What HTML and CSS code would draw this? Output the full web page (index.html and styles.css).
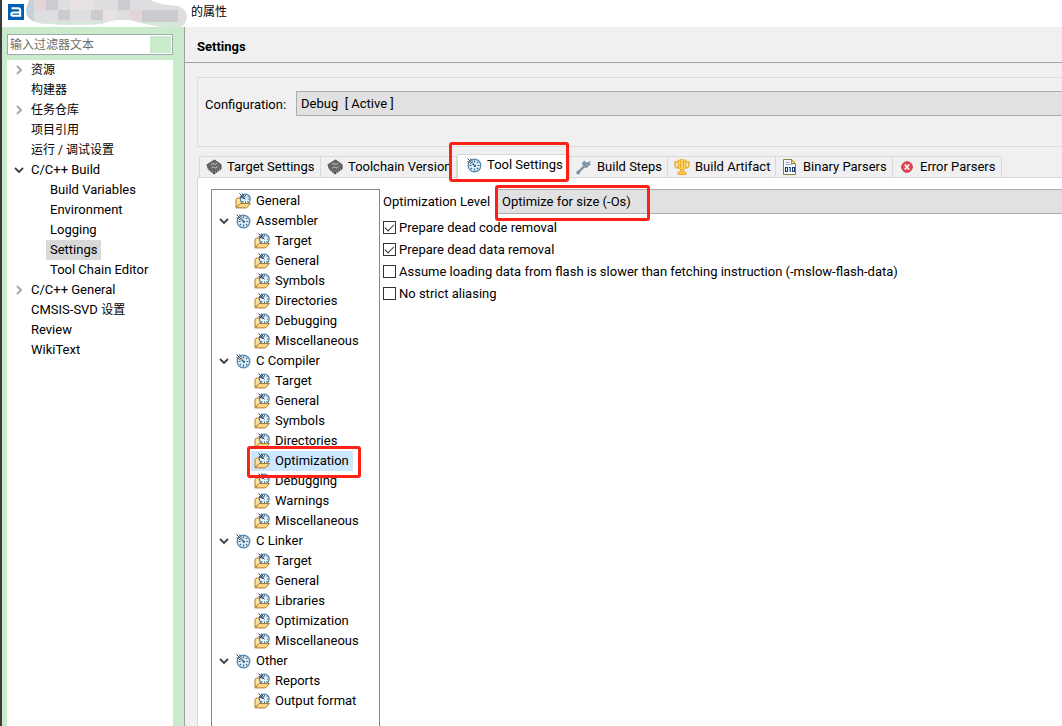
FILE: index.html
```html
<!DOCTYPE html>
<html lang="zh-CN">
<head>
<meta charset="utf-8">
<title>的属性</title>
<link rel="stylesheet" href="styles.css">
</head>
<body>
<svg class="defs" width="0" height="0" aria-hidden="true">
  <symbol id="dial" viewBox="0 0 16 16">
    <circle cx="8.500" cy="8.500" r="6.300" fill="#e3f0f8" stroke="#5d8db4" stroke-width="1.400"/>
    <path d="M8.500 3.500v2M8.500 11.500v2M3.500 8.500h2M11.500 8.500h2M12.200 4.800l-1.200 1.200M4.800 12.200l1.200-1.200M12.200 12.200l-1.200-1.200" stroke="#2f6591" stroke-width="1.200"/>
    <path d="M1.500 1.500l7 7M4.500 1.500l3 5.500M1.500 4.500l5.500 3" stroke="#34495c" stroke-width="1"/>
    <path d="M3 4.500l4 3M4.500 3l3 4" stroke="#fff" stroke-width=".6"/>
    <circle cx="8.800" cy="8.800" r="1.300" fill="#2f6591"/>
  </symbol>
  <symbol id="folder" viewBox="0 0 16 16">
    <path d="M1 14.500V6.500l1.200-1.500h3l1.500 1.500V10z" fill="#fbe3a4" stroke="#b27a2c"/>
    <circle cx="10.300" cy="6" r="4.900" fill="#e9f4fa" stroke="#4a80ab" stroke-width="1.200"/>
    <path d="M10.500 2v1.500M13.300 3.200l-1 1M14.300 6h-1.500M7.300 9l1-1M13.300 9l-1-1M10.500 10V8.500" stroke="#2f6591"/>
    <path d="M4.500.500l6 6M7.300 .500l2.500 4M4.800 3.500l4 2" stroke="#2d4257"/>
    <path d="M1.100 14.900l4-4.400h10.400l-4 4.400z" fill="#f9d68a" stroke="#b27a2c"/>
  </symbol>
  <symbol id="chip" viewBox="0 0 16 16">
    <path d="M.500 5.500L8.500 .500l7 5v4.500L8 15.500l-6-5z" fill="#454545"/>
    <path d="M1 5.500L8.500 1l6.500 4.500-1 4.500-6 4-5-4z" fill="#686868"/>
    <path d="M2.500 9.500v1.500M4.500 11v1.500M6.500 12.500V14M9.500 12.500V14M11.500 11v1.500M13.500 9.500v1.500" stroke="#999"/>
    <path d="M5 5.500q2-2 3-.5t3-1M5.500 9q2-2 3-.5t3-1" fill="none" stroke="#c4c4c4"/>
  </symbol>
  <symbol id="hammer" viewBox="0 0 16 16">
    <path d="M5.500 4.500L8.500 1.500l1.500 2 5.500-1.500-2 2 1.500 1-5 4.500-1.500-1.500z" fill="#7d97ab"/>
    <path d="M8.500 7L2.500 13" stroke="#7893a8" stroke-width="2.400"/>
    <circle cx="2.200" cy="13.500" r="1.900" fill="#7893a8"/>
  </symbol>
  <symbol id="trophy" viewBox="0 0 16 16">
    <path d="M4 3H1v3q0 3 4 3M12 3h3v3q0 3-4 3" fill="none" stroke="#eda92a" stroke-width="1.400"/>
    <path d="M4 1.500q4-2 8 0V8l-2 2.500H6L4 8z" fill="#f8cf61" stroke="#eda92a"/>
    <path d="M6.500 2v7M9.500 2v7" stroke="#eda92a"/>
    <path d="M6.500 10.500h3V13h2.500v2.500H4V13h2.500z" fill="#f8c857" stroke="#eda92a"/>
  </symbol>
  <symbol id="binary" viewBox="0 0 16 16">
    <path d="M1.500 15.500V.500h8l4 4v11z" fill="#fafcff" stroke="#8b7d4c"/>
    <path d="M9.500.500v4h4z" fill="#f1d27a" stroke="#b28b39"/>
    <path d="M3.500 3.500h4M3.500 5.500h7" stroke="#91a8ca"/>
    <path d="M3.500 8.500h2v4h-2zM10.500 8.500h2v4h-2zM7 8.500h1.200v4.500" fill="none" stroke="#173c72" stroke-width="1.100"/>
  </symbol>
  <symbol id="error" viewBox="0 0 16 16">
    <circle cx="8" cy="8" r="5.300" fill="#e34b57" stroke="#c92e40"/>
    <path d="M5.800 5.500l4.400 5M10.200 5.500l-4.400 5" stroke="#fff" stroke-width="1.500"/>
  </symbol>
  <symbol id="open" viewBox="0 0 10 10"><path d="M1 3l4 4 4-4" fill="none" stroke="#404040" stroke-width="1.800"/></symbol>
  <symbol id="closed" viewBox="0 0 10 10"><path d="M3 1l4 4-4 4" fill="none" stroke="#a3a3a3" stroke-width="1.800"/></symbol>
</svg>
<div class="window">
  <header class="titlebar">
    <svg class="logo" viewBox="0 0 16 16" role="img" aria-label="a"><path fill="#0060ae" d="M0 0h16v16H0z"/><path d="M3.500 4.200h6.500q2.200 0 2.200 2.200v5.400H5.500Q3.300 11.800 3.300 10.200T5.500 8.400H12" fill="none" stroke="#fff" stroke-width="2"/></svg>
    <svg class="redaction" viewBox="0 0 164 28" aria-hidden="true">
      <clipPath id="smear"><path d="M3 0H124Q134 5 152 6Q161 9 161 17Q160 27 150 28Q128 27 104 20Q86 19 76 24Q40 26 12 23Q0 20 0 10Z"/></clipPath>
      <g clip-path="url(#smear)">
        <path fill="#dedde0" d="M0 0h164v28H0z"/>
        <path fill="#c5d2de" d="M0 0h8v24H0z"/><path fill="#e2d5d7" d="M8 0h12v10H8zM104 10h12v12h-12z"/>
        <path fill="#cccbd0" d="M32 10h12v10H32zM20 0h12v10H20zM65 10h12v10H65zM92 0h12v10H92zM116 10h36v12h-36z"/>
        <path fill="#e8e3e2" d="M44 0h24v10H44zM77 10h14v10H77z"/>
        <path fill="#d7e8da" d="M14 22h62v6H14zM104 22h60v6h-60z"/>
      </g>
    </svg>
    <span>的属性</span>
  </header>
  <div class="main">
    <aside class="sidebar">
      <div class="filter"><input type="text" placeholder="输入过滤器文本" aria-label="输入过滤器文本"><button type="button" aria-label="清除"></button></div>
      <nav class="pages">
        <ul>
          <li><div class="row"><button class="toggle" type="button" aria-label="展开"><svg><use href="#closed"/></svg></button><a href="#" class="zh">资源</a></div></li>
          <li><div class="row"><a href="#" class="zh">构建器</a></div></li>
          <li><div class="row"><button class="toggle" type="button" aria-label="展开"><svg><use href="#closed"/></svg></button><a href="#" class="zh">任务仓库</a></div></li>
          <li><div class="row"><a href="#" class="zh">项目引用</a></div></li>
          <li><div class="row"><a href="#" class="zh">运行 / 调试设置</a></div></li>
          <li><div class="row"><button class="toggle" type="button" aria-label="折叠"><svg><use href="#open"/></svg></button><a href="#">C/C++ Build</a></div>
            <ul>
              <li><div class="row"><a href="#">Build Variables</a></div></li>
              <li><div class="row"><a href="#">Environment</a></div></li>
              <li><div class="row"><a href="#">Logging</a></div></li>
              <li><div class="row"><a href="#" class="current" aria-current="page">Settings</a></div></li>
              <li><div class="row"><a href="#">Tool Chain Editor</a></div></li>
            </ul>
          </li>
          <li><div class="row"><button class="toggle" type="button" aria-label="展开"><svg><use href="#closed"/></svg></button><a href="#">C/C++ General</a></div></li>
          <li><div class="row"><a href="#"><span>CMSIS-SVD <span class="zh">设置</span></span></a></div></li>
          <li><div class="row"><a href="#">Review</a></div></li>
          <li><div class="row"><a href="#">WikiText</a></div></li>
        </ul>
      </nav>
    </aside>
    <main class="content">
      <h1>Settings</h1>
      <section class="config">
        <label for="config">Configuration:</label>
        <select id="config"><option>Debug&nbsp; [ Active ]</option></select>
      </section>
      <div class="tabs" role="tablist">
        <button type="button" role="tab" class="tab"><svg><use href="#chip"/></svg>Target Settings</button>
        <button type="button" role="tab" class="tab"><svg><use href="#chip"/></svg>Toolchain Version</button>
        <button type="button" role="tab" class="tab selected marked" aria-selected="true"><svg><use href="#dial"/></svg>Tool Settings</button>
        <button type="button" role="tab" class="tab"><svg><use href="#hammer"/></svg>Build Steps</button>
        <button type="button" role="tab" class="tab"><svg><use href="#trophy"/></svg>Build Artifact</button>
        <button type="button" role="tab" class="tab"><svg><use href="#binary"/></svg>Binary Parsers</button>
        <button type="button" role="tab" class="tab"><svg><use href="#error"/></svg>Error Parsers</button>
      </div>
      <section class="panel" role="tabpanel">
        <nav class="tools">
          <ul>
            <li><div class="row"><a href="#"><svg><use href="#folder"/></svg>General</a></div></li>
            <li><div class="row"><button class="toggle" type="button" aria-label="折叠"><svg><use href="#open"/></svg></button><a href="#"><svg><use href="#dial"/></svg>Assembler</a></div>
              <ul>
                <li><div class="row"><a href="#"><svg><use href="#folder"/></svg>Target</a></div></li>
                <li><div class="row"><a href="#"><svg><use href="#folder"/></svg>General</a></div></li>
                <li><div class="row"><a href="#"><svg><use href="#folder"/></svg>Symbols</a></div></li>
                <li><div class="row"><a href="#"><svg><use href="#folder"/></svg>Directories</a></div></li>
                <li><div class="row"><a href="#"><svg><use href="#folder"/></svg>Debugging</a></div></li>
                <li><div class="row"><a href="#"><svg><use href="#folder"/></svg>Miscellaneous</a></div></li>
              </ul>
            </li>
            <li><div class="row"><button class="toggle" type="button" aria-label="折叠"><svg><use href="#open"/></svg></button><a href="#"><svg><use href="#dial"/></svg>C Compiler</a></div>
              <ul>
                <li><div class="row"><a href="#"><svg><use href="#folder"/></svg>Target</a></div></li>
                <li><div class="row"><a href="#"><svg><use href="#folder"/></svg>General</a></div></li>
                <li><div class="row"><a href="#"><svg><use href="#folder"/></svg>Symbols</a></div></li>
                <li><div class="row"><a href="#"><svg><use href="#folder"/></svg>Directories</a></div></li>
                <li><div class="row"><a href="#" class="current marked"><svg><use href="#folder"/></svg>Optimization</a></div></li>
                <li><div class="row"><a href="#"><svg><use href="#folder"/></svg>Debugging</a></div></li>
                <li><div class="row"><a href="#"><svg><use href="#folder"/></svg>Warnings</a></div></li>
                <li><div class="row"><a href="#"><svg><use href="#folder"/></svg>Miscellaneous</a></div></li>
              </ul>
            </li>
            <li><div class="row"><button class="toggle" type="button" aria-label="折叠"><svg><use href="#open"/></svg></button><a href="#"><svg><use href="#dial"/></svg>C Linker</a></div>
              <ul>
                <li><div class="row"><a href="#"><svg><use href="#folder"/></svg>Target</a></div></li>
                <li><div class="row"><a href="#"><svg><use href="#folder"/></svg>General</a></div></li>
                <li><div class="row"><a href="#"><svg><use href="#folder"/></svg>Libraries</a></div></li>
                <li><div class="row"><a href="#"><svg><use href="#folder"/></svg>Optimization</a></div></li>
                <li><div class="row"><a href="#"><svg><use href="#folder"/></svg>Miscellaneous</a></div></li>
              </ul>
            </li>
            <li><div class="row"><button class="toggle" type="button" aria-label="折叠"><svg><use href="#open"/></svg></button><a href="#"><svg><use href="#dial"/></svg>Other</a></div>
              <ul>
                <li><div class="row"><a href="#"><svg><use href="#folder"/></svg>Reports</a></div></li>
                <li><div class="row"><a href="#"><svg><use href="#folder"/></svg>Output format</a></div></li>
              </ul>
            </li>
          </ul>
        </nav>
        <form class="options">
          <div class="level">
            <label for="level">Optimization Level</label>
            <div class="level-box marked"><select id="level"><option>Optimize for size (-Os)</option></select></div>
          </div>
          <label class="check"><input type="checkbox" checked><span>Prepare dead code removal</span></label>
          <label class="check"><input type="checkbox" checked><span>Prepare dead data removal</span></label>
          <label class="check"><input type="checkbox"><span>Assume loading data from flash is slower than fetching instruction (-mslow-flash-data)</span></label>
          <label class="check"><input type="checkbox"><span>No strict aliasing</span></label>
        </form>
      </section>
    </main>
  </div>
</div>
</body>
</html>
```
FILE: styles.css
```css
*, ::before, ::after { box-sizing: border-box; }
body {
  margin: 0;
  font: 13px/20px Roboto, "Noto Sans CJK SC", sans-serif;
  color: #000;
  background: #f0f0f0;
}
button, input, select { font: inherit; color: inherit; margin: 0; padding: 0; border: 0; border-radius: 0; }
button { background: none; }
a { color: inherit; text-decoration: none; }
ul { list-style: none; margin: 0; padding: 0; }
svg { display: block; flex: none; width: 16px; height: 16px; }
.defs { position: absolute; width: 0; height: 0; }
.zh { font-size: 12px; }

.window {
  display: flex;
  flex-direction: column;
  height: 100vh;
  overflow: hidden;
  border-left: 2px solid #3a3a3a;
}
.titlebar {
  display: flex;
  flex: none;
  align-items: center;
  height: 27px;
  padding-left: 6px;
  padding-bottom: 4px;
  background: #fff;
  font-size: 12px;
}
.titlebar .redaction { width: 164px; height: 28px; margin: 0 1px 0 2px; align-self: flex-start; }
.main { display: flex; flex: 1; min-height: 0; }

.sidebar {
  display: flex;
  flex: none;
  flex-direction: column;
  width: 183px;
  padding: 7px 11px 0 5px;
  background: #c9eacb;
  border-right: 1px solid #a0a0a0;
}
.filter { display: flex; height: 21px; padding: 1px; background: #fff; border: 1px solid #a5a8b0; }
.filter input { flex: 1; min-width: 0; padding-left: 1px; font-size: 12px; background: none; outline: 0; }
.filter input::placeholder { color: #6d6d6d; opacity: 1; }
.filter button { width: 21px; background: #c9eacb; }
.pages { flex: 1; margin-top: 5px; background: #fff; }
.row { display: flex; height: 20px; padding-left: 20px; }
.toggle { display: flex; align-items: center; width: 20px; height: 20px; margin-left: -20px; padding-left: 7px; }
.toggle svg { width: 10px; height: 10px; }
.row a { position: relative; display: flex; align-items: center; padding: 0 4px; white-space: nowrap; }
.pages ul ul { padding-left: 19px; }
.pages .current { background: #d9d9d9; }

.content { display: flex; flex: 1; flex-direction: column; min-width: 0; }
h1 { margin: 0; padding: 10px 12px 5px; font-size: 13px; line-height: 20px; border-bottom: 1px solid #a0a0a0; }
.config {
  display: flex;
  flex: none;
  align-items: flex-start;
  gap: 8px;
  height: 70px;
  margin: 14px 0 7px 12px;
  padding: 13px 0 0 7px;
  border: 1px solid #dcdcdc;
  border-right: 0;
}
.config label { width: 83px; padding-top: 4px; white-space: nowrap; }
select { appearance: none; flex: 1; min-width: 0; height: 25px; padding: 1px 4px 0; background: #e1e1e1; border: 1px solid #adadad; border-right: 0; }

.tabs { display: grid; flex: none; grid-template-columns: 122px 136px 113px 98px 108px 117px 109px; align-items: end; height: 23px; margin-left: 14px; }
.tab { position: relative; display: flex; align-items: center; gap: 5px; height: 22px; padding: 0 0 1px 6px; border: 1px solid #d9d9d9; border-width: 1px 1px 0 0; white-space: nowrap; }
.tab:first-child { border-left-width: 1px; }
.tab.selected { z-index: 1; height: 25px; margin-bottom: -1px; padding: 0 0 4px 8px; background: #fff; border-left-width: 1px; }
.panel { display: flex; flex: 1; gap: 3px; min-height: 0; margin-left: 12px; padding: 11px 0 0 13px; background: #fff; border: 1px solid #d9d9d9; border-width: 1px 0 0 1px; }

.tools { flex: none; width: 169px; border: 1px solid #828790; border-bottom: 0; padding-top: 1px; overflow: hidden; }
.tools a { gap: 5px; padding-left: 3px; }
.tools ul ul { padding-left: 19px; }
.tools .current { background: #cce8ff; }
.options { flex: 1; min-width: 0; }
.level { display: flex; height: 27px; }
.level > label { width: 114px; padding-top: 3px; white-space: nowrap; }
.level-box { position: relative; display: flex; flex: 1; min-width: 0; }
.check { display: flex; align-items: center; gap: 3px; height: 22px; white-space: nowrap; }
.check span { padding-top: 2px; }
.check input { appearance: none; flex: none; width: 13px; height: 13px; background: #fff; border: 1px solid #333; }
.check input:checked::after { content: ""; display: block; width: 9px; height: 5px; margin: 2px 1px; border: solid #333; border-width: 0 0 1px 1px; transform: rotate(-45deg); }

.marked::after { content: ""; position: absolute; z-index: 2; border: 3px solid #ff2015; border-radius: 3px; pointer-events: none; }
.tab.marked::after { inset: -13px 0 -3px -9px; }
.tools .marked::after { inset: -5px -8px -7px -4px; }
.level-box.marked::after { top: -4px; left: -2px; width: 155px; height: 36px; }
```
